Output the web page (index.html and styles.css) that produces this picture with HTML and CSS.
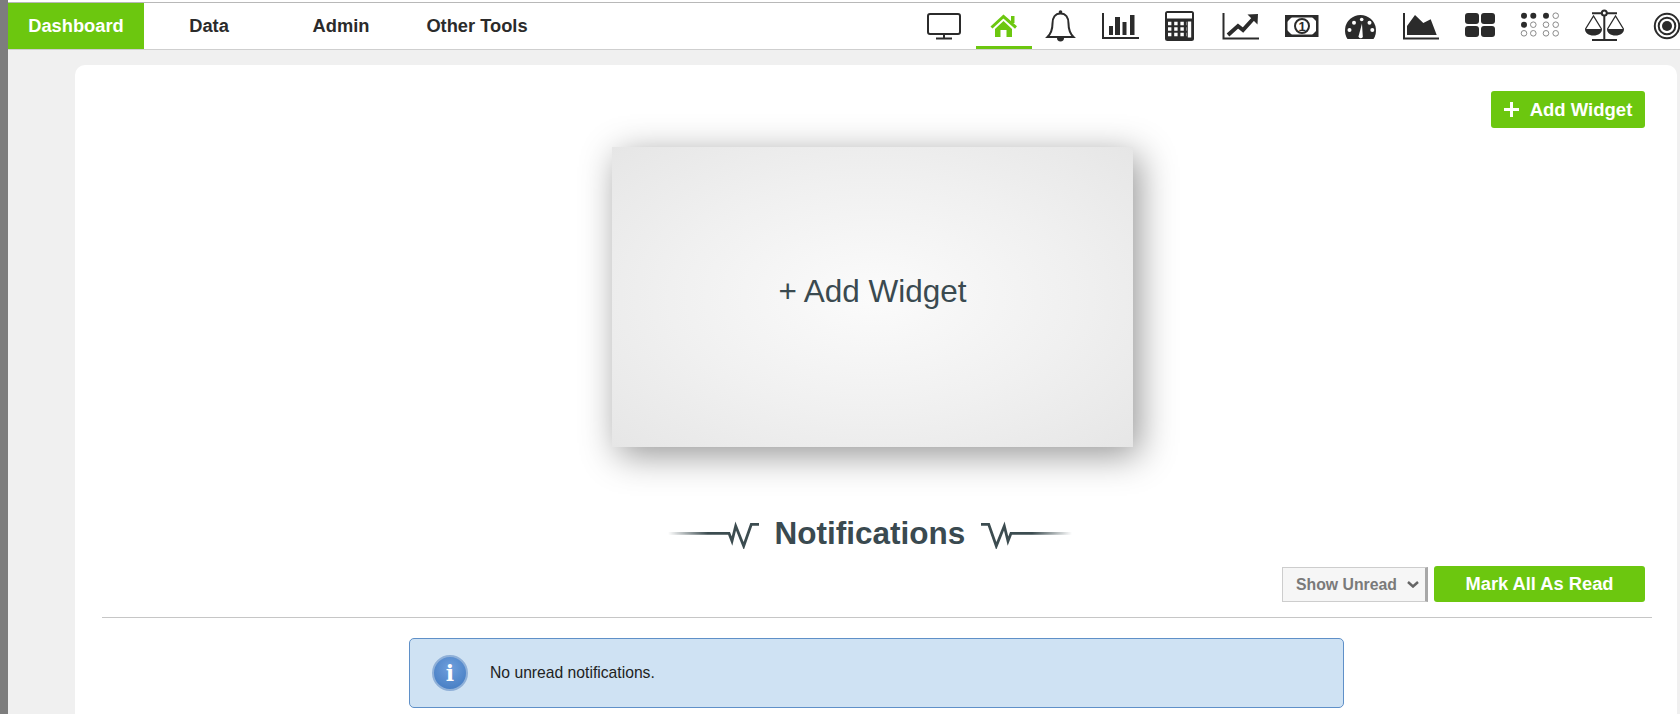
FILE: index.html
```html
<!DOCTYPE html>
<html lang="en">
<head>
  <meta charset="UTF-8">
  <title>Dashboard</title>
  <link rel="stylesheet" href="styles.css">
</head>
<body>
<div class="topbar">
  <nav class="nav">
    <a class="nav-item current">Dashboard</a>
    <a class="nav-item data">Data</a>
    <a class="nav-item admin">Admin</a>
    <a class="nav-item tools">Other Tools</a>
    <div class="icons">
      <a class="icon"><svg viewBox="0 0 56 46"><rect x="12" y="11" width="32" height="20" rx="2" class="line"/><path d="M28 31v4M20 35.500h16" class="line"/></svg></a>
      <a class="icon current"><svg viewBox="0 0 56 46"><path d="M15.500 24.500 27.500 13.500l12.500 11" class="roof"/><path d="M35 13h3.500v7H35z" class="leaf"/><path d="M19 26 27.500 18l8.500 8v8h-5.500v-7h-6v7H19z" class="leaf"/></svg></a>
      <a class="icon"><svg viewBox="0 0 56 46"><circle cx="24.500" cy="9" r="1.800" class="solid"/><path d="M24.500 10.500c-5.500 0-8 4.500-8 10 0 6-1.500 10-5 13.500h26c-3.500-3.500-5-7.500-5-13.500 0-5.500-2.500-10-8-10z" class="line"/><path d="M21 35a3.500 3.500 0 0 0 7 0z" class="solid"/></svg></a>
      <a class="icon"><svg viewBox="0 0 56 46"><path d="M7 10v25h36" class="line"/><path d="M13 23h4v9h-4zM19 14h5v18h-5zM26.500 19h4v13h-4zM34 12h4.500v20H34z" class="solid"/></svg></a>
      <a class="icon"><svg viewBox="0 0 56 46"><rect x="9" y="8" width="29" height="30" rx="2.500" class="solid"/><rect x="11" y="10" width="25" height="5.500" fill="#fff"/><path d="M12 20.500H31M12 26H31M12 31.500H31" class="keys"/><path d="M33.500 18.500v16" class="key-tall"/></svg></a>
      <a class="icon"><svg viewBox="0 0 56 46"><path d="M7.500 10v25.500H43" class="line"/><path d="M12 32l10-9 5 4 10-11" class="trend"/><path d="M31.500 11.500l10.500-.5-.5 10.500z" class="solid"/></svg></a>
      <a class="icon"><svg viewBox="0 0 56 46"><rect x="10.250" y="13.250" width="31" height="19.500" class="line thick"/><path d="M10 12h8l-8 8zM42 12h-8l8 8zM10 34h8l-8-8zM42 34h-8l8-8z" class="solid"/><circle cx="26" cy="23" r="7" class="line disc"/><text x="26" y="27.500" class="note">1</text></svg></a>
      <a class="icon"><svg viewBox="0 0 56 46"><path d="M11.500 36a15.500 15.500 0 1 1 26 0z" class="solid"/><circle cx="13.500" cy="27" r="2" fill="#fff"/><circle cx="18" cy="19.700" r="2" fill="#fff"/><circle cx="25.700" cy="16.500" r="1.800" fill="#fff"/><circle cx="33.500" cy="19.700" r="2" fill="#fff"/><circle cx="36.300" cy="27" r="2" fill="#fff"/><path d="M22.500 33.500 26 20.500l.8 13.500a2.300 2.300 0 0 1-4.300-.5z" fill="#fff"/></svg></a>
      <a class="icon"><svg viewBox="0 0 56 46"><path d="M8 10v25.500h35" class="line"/><path d="M11 32v-9l8-11 8.300 8 7.400-3.700L40.700 32z" class="solid"/></svg></a>
      <a class="icon"><svg viewBox="0 0 56 46"><rect x="9" y="10" width="14" height="11" rx="3" class="solid"/><rect x="25" y="10" width="14" height="11" rx="3" class="solid"/><rect x="9" y="23" width="14" height="11" rx="3" class="solid"/><rect x="25" y="23" width="14" height="11" rx="3" class="solid"/></svg></a>
      <a class="icon"><svg viewBox="0 0 56 46">
        <circle cx="8" cy="12.700" r="3" class="solid"/><circle cx="17.300" cy="12.700" r="3" class="solid"/><circle cx="30" cy="12.700" r="3" class="solid"/><circle cx="39.700" cy="12.700" r="2.800" class="ring"/>
        <circle cx="8" cy="21.700" r="3" class="solid"/><circle cx="17.300" cy="21.700" r="2.800" class="ring"/><circle cx="30" cy="21.700" r="2.800" class="ring"/><circle cx="39.700" cy="21.700" r="2.800" class="ring"/>
        <circle cx="8" cy="30.300" r="2.800" class="ring"/><circle cx="17.300" cy="30.300" r="2.800" class="ring"/><circle cx="30" cy="30.300" r="2.800" class="ring"/><circle cx="39.700" cy="30.300" r="2.800" class="ring"/>
      </svg></a>
      <a class="icon"><svg viewBox="0 0 56 46"><path d="M28.300 10v27M16 37h25M16 10.300h25" class="line"/><circle cx="28.300" cy="10" r="2.500" class="line disc"/><path d="M9.500 26 17.500 13l8 13M31.500 26l8-13 8 13" class="thin"/><path d="M9 26h17c0 4-3.500 6.500-8.500 6.500S9 30 9 26zM31 26h17c0 4-3.500 6.500-8.500 6.500S31 30 31 26z" class="solid"/></svg></a>
      <a class="icon last"><svg viewBox="0 0 28 46"><circle cx="15" cy="23" r="12.200" class="line"/><circle cx="15" cy="23" r="8.300" class="line"/><circle cx="15" cy="23" r="5" class="solid"/></svg></a>
    </div>
  </nav>
</div>

<div class="main">
  <div class="card">
    <a class="btn add-btn">
      <svg class="plus" viewBox="0 0 15 15"><path d="M7.500 0v15M0 7.500h15"/></svg>
      Add Widget
    </a>

    <div class="widget">+ Add Widget</div>

    <div class="heading">
      <svg class="ornament" viewBox="0 0 91 28"><defs><linearGradient id="fade" gradientUnits="userSpaceOnUse" x1="0" y1="0" x2="40" y2="0"><stop offset="0" stop-color="#3c4c50" stop-opacity="0"/><stop offset="1" stop-color="#3c4c50"/></linearGradient></defs><path d="M0 12.300H61L64 20 67.700 5 75.700 25 83.300 3.300H91" class="wave"/></svg>
      <h2>Notifications</h2>
      <svg class="ornament flip" viewBox="0 0 91 28"><path d="M0 12.300H61L64 20 67.700 5 75.700 25 83.300 3.300H91" class="wave"/></svg>
    </div>

    <div class="controls">
      <div class="select">Show Unread
        <svg class="chevron" viewBox="0 0 12 7"><path d="M1 1l5 4.500L11 1"/></svg>
      </div>
      <a class="btn mark-btn">Mark All As Read</a>
    </div>

    <hr class="divider">

    <div class="alert">
      <span class="info">i</span>
      <span>No unread notifications.</span>
    </div>
  </div>
</div>
</body>
</html>
```

FILE: styles.css
```css
html, body {
  height: 100%;
  margin: 0;
}

body {
  display: flex;
  flex-direction: column;
  overflow: hidden;
  border-left: 8px solid #7d7d7d;
  background: #f0f0f0;
  color: #2b2b2b;
  font-family: "Liberation Sans", Arial, sans-serif;
}

a {
  text-decoration: none;
}

/* top nav */
.topbar {
  padding-top: 2px;
  background: #fff;
}

.nav {
  display: flex;
  height: 46px;
  border-top: 1px solid #b8b8b8;
  border-bottom: 1px solid #cfcfcf;
  background: #fff;
}

.nav-item {
  display: flex;
  align-items: center;
  justify-content: center;
  color: #2b2b2b;
  font-size: 18.300px;
  font-weight: 700;
}

.nav-item.current {
  width: 136px;
  background: #6cc70f;
  color: #fff;
}

.nav-item.data {
  width: 130px;
}

.nav-item.admin {
  width: 134px;
}

.nav-item.tools {
  width: 138px;
}

.icons {
  display: flex;
  gap: 4px;
  margin-left: auto;
}

.icon {
  width: 56px;
  height: 46px;
}

.icon.current {
  box-shadow: inset 0 -3px 0 #6cc70f;
}

.icon.last {
  display: flex;
  justify-content: flex-end;
  width: 44px;
}

.icon svg {
  display: block;
  width: 56px;
  height: 46px;
}

.icon.last svg {
  width: 28px;
}

.line {
  fill: none;
  stroke: #2b2b2b;
  stroke-width: 2;
}

.line.thick {
  fill: #fff;
  stroke-width: 2.500;
}

.line.disc {
  fill: #fff;
}

.thin {
  fill: none;
  stroke: #2b2b2b;
  stroke-width: 1.300;
}

.solid {
  fill: #2b2b2b;
}

.ring {
  fill: none;
  stroke: #8a8a8a;
  stroke-width: 1;
}

.leaf {
  fill: #6cc70f;
}

.roof {
  fill: none;
  stroke: #6cc70f;
  stroke-width: 3;
}

.keys {
  fill: none;
  stroke: #fff;
  stroke-width: 3.400;
  stroke-dasharray: 3.400 2.800;
}

.key-tall {
  fill: none;
  stroke: #fff;
  stroke-width: 3.400;
}

.trend {
  fill: none;
  stroke: #2b2b2b;
  stroke-width: 4;
}

.note {
  fill: #2b2b2b;
  font-size: 13px;
  font-weight: 700;
  text-anchor: middle;
}

/* page body */
.main {
  display: flex;
  flex: 1;
  min-height: 0;
  padding: 15px 3px 0 67px;
}

.card {
  display: flex;
  flex: 1;
  flex-direction: column;
  box-sizing: border-box;
  padding: 27px 25px 0 27px;
  border-radius: 10px 10px 0 0;
  background: #fff;
}

.btn {
  display: flex;
  align-items: center;
  justify-content: center;
  border-radius: 3px;
  background: #6cc70f;
  color: #fff;
  font-size: 18.300px;
  font-weight: 700;
}

.add-btn {
  gap: 11px;
  align-self: flex-end;
  width: 154px;
  height: 37px;
  margin: -1px 7px 0 0;
  font-size: 18.500px;
}

.plus {
  width: 15px;
  height: 15px;
  fill: none;
  stroke: #fff;
  stroke-width: 3;
}

.widget {
  display: flex;
  align-items: center;
  justify-content: center;
  box-sizing: border-box;
  width: 521px;
  height: 300px;
  margin: 19px 0 0 510px;
  padding-bottom: 12px;
  background: radial-gradient(ellipse at center, #fbfbfb 0%, #f0f0f0 55%, #e6e6e6 100%);
  box-shadow: 6px 8px 34px rgba(0, 0, 0, .42);
  color: #3a4a50;
  font-size: 31.500px;
}

.heading {
  display: flex;
  align-items: center;
  justify-content: center;
  gap: 16px;
  height: 36px;
  margin: 68px 14px 0 0;
}

.heading h2 {
  margin: 0;
  color: #3a4a50;
  font-size: 31.500px;
  font-weight: 700;
}

.ornament {
  width: 91px;
  height: 28px;
  margin-top: 3px;
}

.ornament.flip {
  transform: scaleX(-1);
}

.wave {
  fill: none;
  stroke: url(#fade);
  stroke-width: 2.800;
  filter: blur(.4px);
}

.controls {
  display: flex;
  gap: 6px;
  justify-content: flex-end;
  height: 36px;
  margin: 15px 7px 0 0;
}

.select {
  display: flex;
  align-items: center;
  box-sizing: border-box;
  width: 146px;
  height: 35px;
  margin-top: 1px;
  padding-left: 13px;
  border: 1px solid #cdcdcd;
  border-right: 3px solid #a8a8a8;
  background: #f6f6f6;
  color: #7a7a7a;
  font-size: 15.800px;
  font-weight: 700;
}

.chevron {
  width: 12px;
  height: 7px;
  margin-left: 10px;
  fill: none;
  stroke: #666;
  stroke-width: 2.500;
}

.mark-btn {
  width: 211px;
}

.divider {
  width: 100%;
  height: 1px;
  margin: 15px 0 0;
  border: 0;
  background: #c6c6c6;
}

.alert {
  display: flex;
  flex-shrink: 0;
  align-items: center;
  gap: 22px;
  box-sizing: border-box;
  width: 935px;
  height: 70px;
  margin: 20px 0 0 307px;
  padding-left: 22px;
  border: 1.500px solid #5f90c8;
  border-radius: 5px;
  background: #cfe2f3;
  color: #222;
  font-size: 15.700px;
}

.info {
  display: flex;
  align-items: center;
  justify-content: center;
  box-sizing: border-box;
  width: 36px;
  height: 36px;
  border: 2px solid #8fb0d8;
  border-radius: 50%;
  background: radial-gradient(circle at 50% 35%, #6f9fdc, #3f78bf);
  color: #fff;
  font-family: "DejaVu Serif", serif;
  font-size: 22px;
  font-weight: 700;
}
```
